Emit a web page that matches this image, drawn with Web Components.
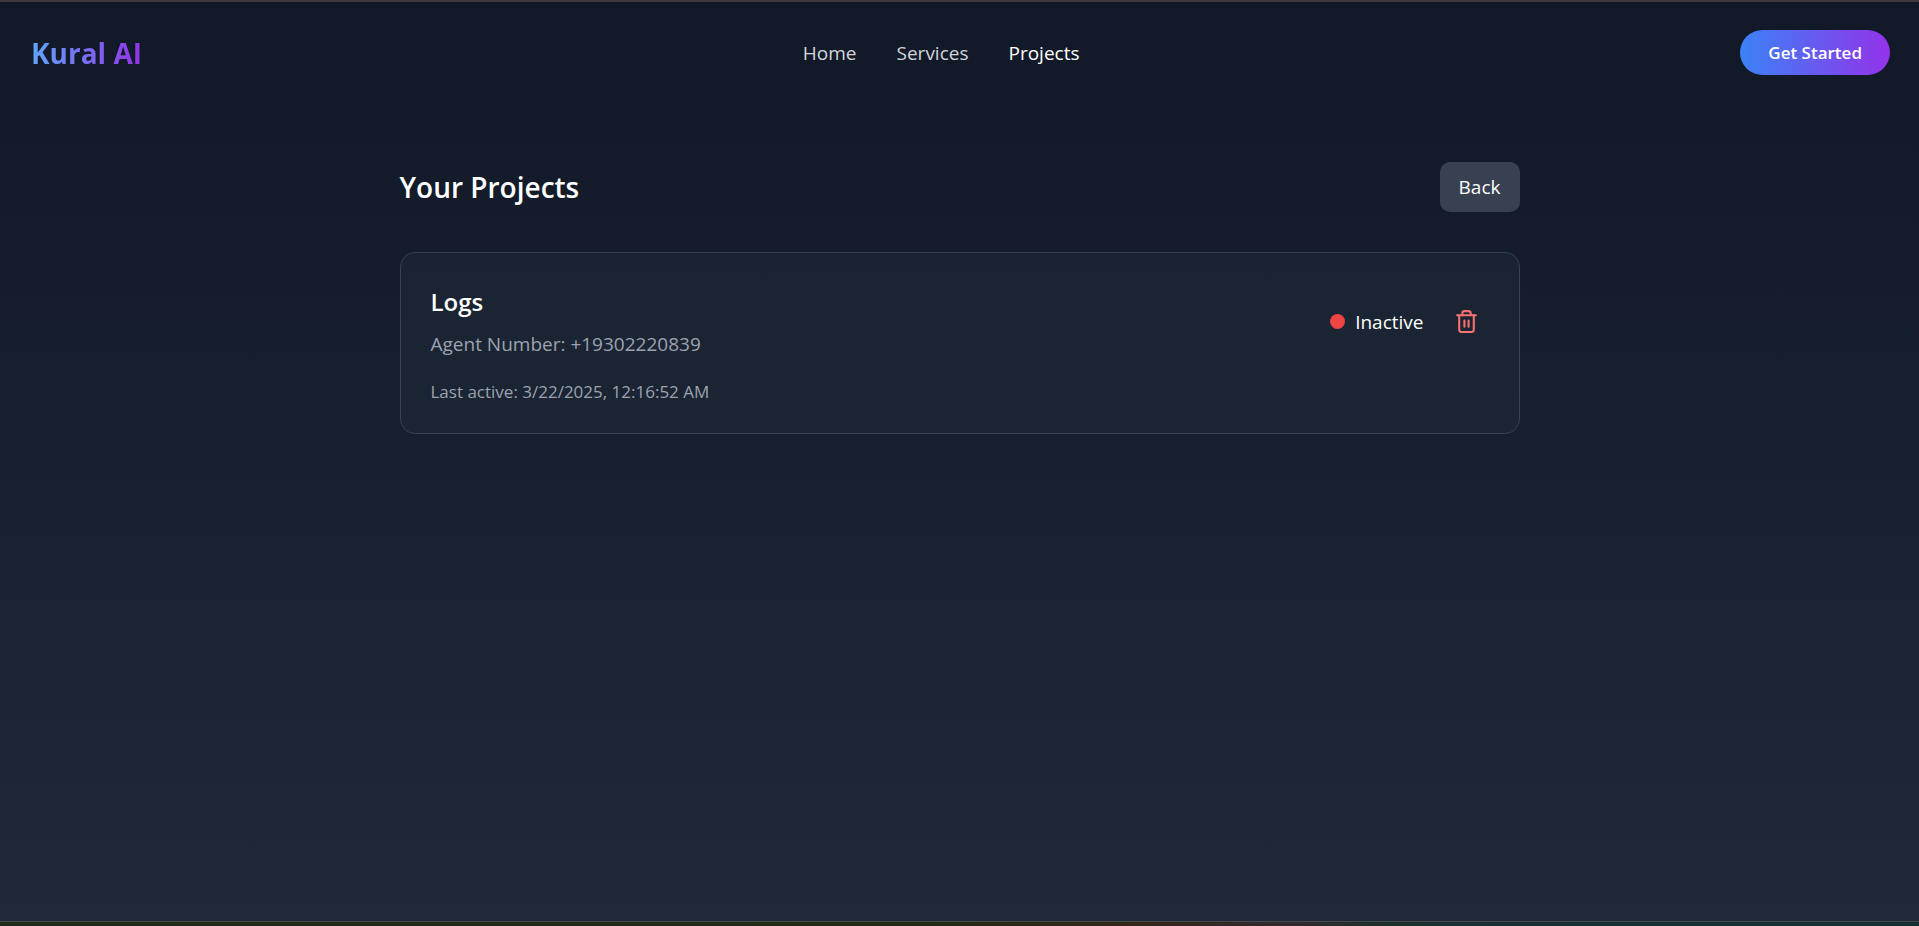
<!DOCTYPE html>
<html lang="en">
<head>
<meta charset="utf-8">
<title>Kural AI</title>
<style>
  body { margin: 0; font-family: "Open Sans", "Noto Sans", sans-serif; color: #fff; background: #111827; }
</style>
</head>
<body>
<app-shell>
  <site-header slot="header">
    <nav-link href="#home">Home</nav-link>
    <nav-link href="#services">Services</nav-link>
    <nav-link href="#projects" current>Projects</nav-link>
  </site-header>
  <project-list heading="Your Projects">
    <project-card name="Logs" number="+19302220839" last-active="3/22/2025, 12:16:52 AM" status="Inactive"></project-card>
  </project-list>
</app-shell>

<script>
class BaseElement extends HTMLElement {
  constructor() {
    super();
    this.attachShadow({ mode: 'open' });
  }
  connectedCallback() {
    this.shadowRoot.innerHTML = this.render();
  }
}

customElements.define('app-shell', class extends BaseElement {
  render() {
    return `<style>
      :host { display: flex; flex-direction: column; box-sizing: border-box; min-height: 100vh;
        border-top: 2px solid #3b393c; }
      .page { flex: 1; background: linear-gradient(to bottom, #111827, #1f2937); }
      .edge { height: 4px; border-top: 1px solid #45494b;
        background: linear-gradient(to right, #1f2a18 0%, #232a16 50%, #35281a 60%, #302a30 67%, #1c3030 73%, #142f32 100%); }
    </style>
    <div class="page"><slot name="header"></slot><slot></slot></div>
    <div class="edge"></div>`;
  }
});

customElements.define('site-header', class extends BaseElement {
  render() {
    return `<style>
      :host { display: block; }
      header { display: flex; align-items: center; justify-content: space-between; padding: 28px 29px 30px 31px; }
      .logo { font-size: 28px; line-height: 40px; font-weight: 700; text-decoration: none; color: transparent;
        background: linear-gradient(to right, #60a5fa, #9333ea); background-clip: text; -webkit-background-clip: text; }
      nav { display: flex; gap: 40px; }
      button { font: 600 17px/25px "Open Sans", "Noto Sans", sans-serif; color: #fff; border: 0; border-radius: 23px;
        padding: 10px 28px; background: linear-gradient(to right, #3b82f6, #9333ea); cursor: pointer; }
    </style>
    <header>
      <a class="logo" href="#home">Kural AI</a>
      <nav><slot></slot></nav>
      <button type="button">Get Started</button>
    </header>`;
  }
});

customElements.define('nav-link', class extends BaseElement {
  render() {
    return `<style>
      :host { display: block; font-size: 19px; line-height: 30px; }
      a { color: #d1d5db; text-decoration: none; }
      :host([current]) a { color: #fff; }
    </style>
    <a href="${this.getAttribute('href')}"><slot></slot></a>`;
  }
});

customElements.define('project-list', class extends BaseElement {
  render() {
    return `<style>
      :host { display: block; box-sizing: border-box; max-width: 1120px; margin: 0 auto; padding: 57px 0 40px; }
      .bar { display: flex; align-items: center; justify-content: space-between; margin-bottom: 40px; }
      h1 { margin: 0; font-size: 28px; line-height: 42px; font-weight: 600; }
      button { font: 400 19px/30px "Open Sans", "Noto Sans", sans-serif; color: #fff; border: 0; border-radius: 10px;
        padding: 10px 19px; background: #374151; cursor: pointer; }
    </style>
    <div class="bar">
      <h1>${this.getAttribute('heading')}</h1>
      <button type="button">Back</button>
    </div>
    <slot></slot>`;
  }
});

customElements.define('project-card', class extends BaseElement {
  render() {
    const get = (name) => this.getAttribute(name);
    return `<style>
      :host { display: block; box-sizing: border-box; padding: 31px 30px 29px; border: 1px solid #374151; border-radius: 15px;
        background: #1f293780; }
      .row, .status, .actions { display: flex; align-items: center; }
      .row { justify-content: space-between; }
      .actions { gap: 20px; }
      .status { gap: 10px; font-size: 19px; line-height: 30px; }
      .dot { width: 15px; height: 15px; border-radius: 50%; background: #ef4444; }
      h2 { margin: 0 0 10px; font-size: 24px; line-height: 35px; font-weight: 600; }
      p { margin: 0; font-size: 19px; line-height: 30px; color: #9ca3af; }
      .last { margin-top: 20px; font-size: 17px; line-height: 25px; }
      button { display: flex; padding: 10px; border: 0; background: none; color: #f87171; cursor: pointer; }
      svg { width: 25px; height: 25px; }
    </style>
    <div class="row">
      <div>
        <h2>${get('name')}</h2>
        <p>Agent Number: ${get('number')}</p>
      </div>
      <div class="actions">
        <div class="status"><span class="dot"></span><span>${get('status')}</span></div>
        <button type="button" aria-label="Delete project">
          <svg viewBox="0 0 24 24" fill="none" stroke="currentColor" stroke-width="2" stroke-linecap="round" stroke-linejoin="round" aria-hidden="true">
            <path d="M3 6h18"/><path d="M19 6v14a2 2 0 0 1-2 2H7a2 2 0 0 1-2-2V6"/>
            <path d="M8 6V4a2 2 0 0 1 2-2h4a2 2 0 0 1 2 2v2"/><path d="M10 11v6M14 11v6"/>
          </svg>
        </button>
      </div>
    </div>
    <p class="last">Last active: ${get('last-active')}</p>`;
  }
});
</script>
</body>
</html>
